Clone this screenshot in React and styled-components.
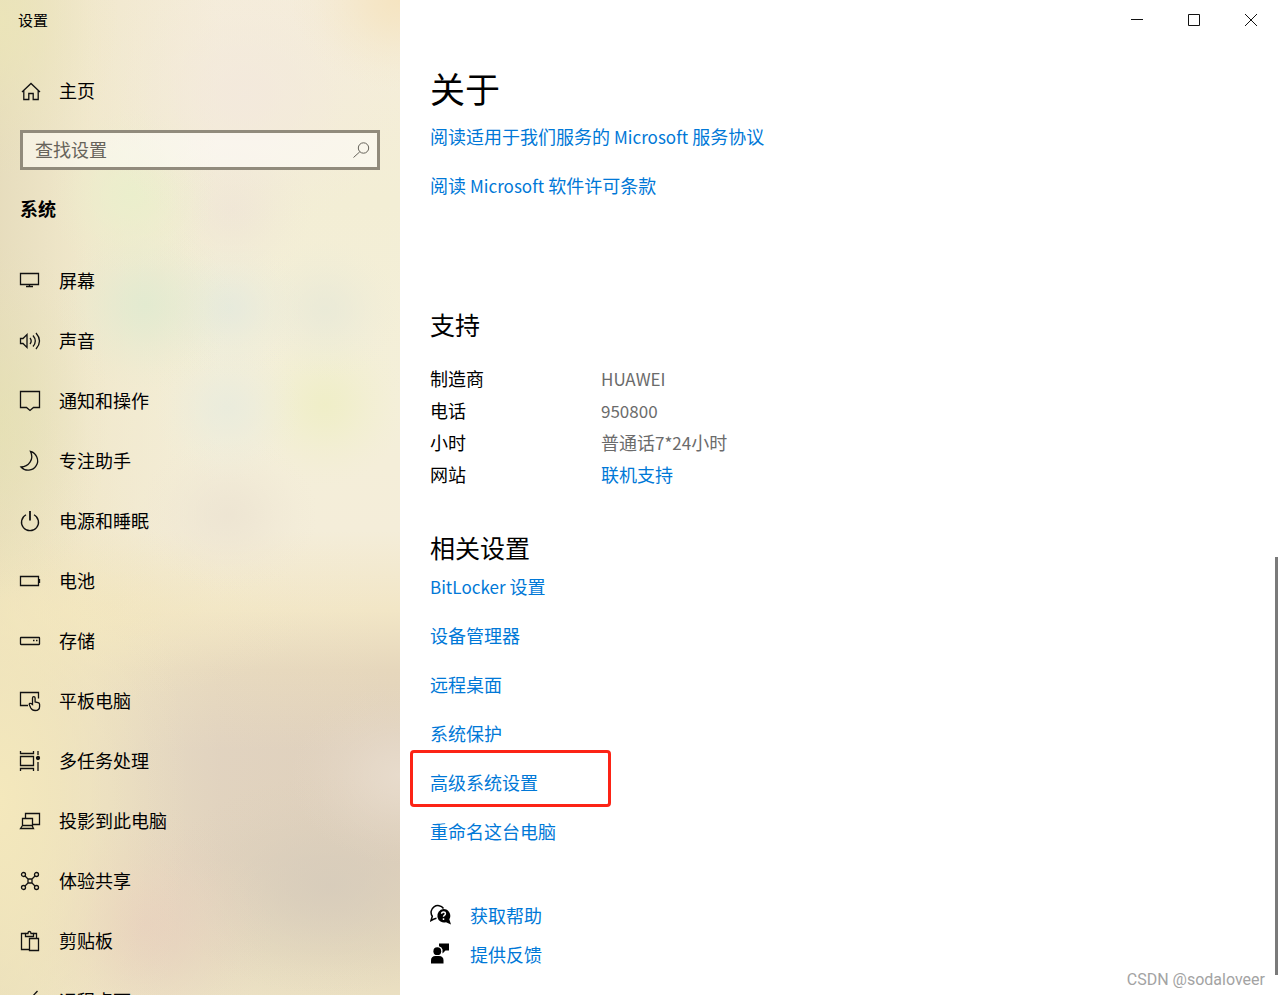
import React from "react";
import styled, { createGlobalStyle, css } from "styled-components";

const GlobalStyle = createGlobalStyle`
  *, *::before, *::after { box-sizing: border-box; }
  body {
    margin: 0;
    background: #fff;
    color: #000;
    font-family: "Noto Sans CJK SC", "Open Sans", sans-serif;
    font-size: 18px;
    line-height: 24px;
  }
  ul, dl, dd, h1, h2 { margin: 0; padding: 0; }
  ul { list-style: none; }
`;

const Window = styled.div`
  display: flex;
  height: 100vh;
  overflow: hidden;
`;

/* Sidebar */

const blob = (x, y, w, h, color, peak = 0.9) =>
  `radial-gradient(${w}px ${h}px at ${x}px ${y}px, rgba(${color}, ${peak}), rgba(${color}, ${peak * 0.75}) 25%, rgba(${color}, ${peak * 0.35}) 55%, rgba(${color}, ${peak * 0.1}) 80%, rgba(${color}, 0))`;

const Sidebar = styled.aside`
  flex: 0 0 400px;
  overflow: hidden;
  background:
    ${blob(400, 0, 110, 90, "245,227,190")},
    ${blob(0, 20, 120, 160, "236,230,184", 0.8)},
    ${blob(245, 95, 160, 140, "243,232,221", 0.8)},
    ${blob(132, 195, 85, 85, "234,239,204")},
    ${blob(232, 210, 80, 80, "239,229,214", 0.8)},
    ${blob(145, 305, 90, 85, "225,234,208")},
    ${blob(230, 308, 75, 70, "228,233,221", 0.8)},
    ${blob(325, 310, 75, 70, "232,233,215", 0.8)},
    ${blob(228, 408, 75, 75, "232,235,221", 0.8)},
    ${blob(325, 405, 80, 80, "239,238,198")},
    ${blob(228, 515, 90, 80, "236,227,209", 0.8)},
    ${blob(0, 420, 110, 180, "229,225,178", 0.7)},
    ${blob(0, 800, 190, 420, "244,232,188", 1)},
    ${blob(60, 615, 260, 90, "243,230,190", 0.7)},
    ${blob(400, 775, 110, 90, "232,220,205")},
    ${blob(145, 925, 130, 120, "231,208,190")},
    ${blob(330, 885, 170, 110, "215,204,187")},
    linear-gradient(90deg, rgba(230,220,188,0.95), rgba(239,229,198,0.65) 22%, rgba(244,238,216,0.1) 55%, rgba(244,238,216,0)),
    linear-gradient(180deg, #f5eddb 0, #f3eed5 200px, #f4efd9 400px, #f4edd9 530px, #f2e6c6 610px, #e6d7bc 670px, #dfd0bd 750px, #dfd0bb 860px, #e5d9bd 950px, #ebe0c2 1000px);
`;

const WindowTitle = styled.div`
  height: 40px;
  padding: 8px 18px;
  font-size: 15px;
`;

const SidebarItem = styled.a`
  display: flex;
  align-items: center;
  gap: 18px;
  height: 60px;
  padding-left: 19px;
  color: #000;
  text-decoration: none;
`;

const ItemLabel = styled.span`
  padding-bottom: 2px;
`;

const HomeArea = styled.div`
  padding: 21px 0 9px;
`;

const Icon = styled.svg`
  flex: none;
  width: 22px;
  height: 22px;
  fill: none;
  stroke: #111;
  stroke-width: 1.3;
`;

const SearchBox = styled.label`
  display: flex;
  align-items: center;
  height: 40px;
  margin: 0 20px;
  padding: 0 6px 0 12px;
  border: 3px solid #918b7c;
  background: rgba(255, 255, 255, 0.5);
`;

const SearchInput = styled.input`
  flex: 1;
  min-width: 0;
  padding: 0 0 2px;
  border: 0;
  outline: 0;
  background: transparent;
  color: #000;
  font: inherit;
  &::placeholder { color: #66635a; opacity: 1; }
`;

const SearchIcon = styled(Icon)`
  width: 20px;
  height: 20px;
  stroke: #66635a;
  stroke-width: 1;
`;

const Category = styled.h2`
  margin: 26px 20px 31px;
  font-size: 18px;
  font-weight: 700;
`;

/* Main pane */

const Main = styled.main`
  position: relative;
  flex: 1;
  min-width: 0;
  overflow: hidden;
  background: #fff;
`;

const Controls = styled.div`
  display: flex;
  justify-content: flex-end;
  padding-right: 1px;
`;

const ControlButton = styled.button`
  width: 57px;
  height: 40px;
  padding: 0;
  border: 0;
  background: none;
  svg { display: block; margin: 0 auto; stroke-width: 1; }
`;

const Content = styled.div`
  padding: 24px 30px 0;
`;

const PageTitle = styled.h1`
  margin-bottom: 12px;
  font-size: 35px;
  font-weight: 400;
  line-height: 48px;
`;

const SectionTitle = styled.h2`
  font-size: 25px;
  font-weight: 400;
  line-height: 36px;
`;

const Section = styled.section`
  margin-top: ${(p) => p.$space}px;
`;

const LinkList = styled.ul`
  display: grid;
  justify-items: start;
  gap: 25px;
`;

const RelatedList = styled(LinkList)`
  margin-top: 9px;
`;

const LinkRow = styled.li`
  position: relative;
  ${(p) =>
    p.$marked &&
    css`
      &::after {
        content: "";
        position: absolute;
        top: -20px;
        left: -20px;
        width: 201px;
        height: 57px;
        border: 3px solid #fc2315;
        border-radius: 4px;
        pointer-events: none;
      }
    `}
`;

const TextLink = styled.a`
  color: #0078d7;
  text-decoration: none;
`;

const Latin = styled.span`
  font-size: 17px;
  line-height: 17px;
`;

const Details = styled.dl`
  display: grid;
  grid-template-columns: 171px 1fr;
  row-gap: 8px;
  margin-top: 24px;
`;

const DetailValue = styled.dd`
  color: #6b6b6b;
`;

const HelpList = styled.ul`
  display: grid;
  gap: 15px;
  margin-top: 60px;
`;

const HelpRow = styled.li`
  display: flex;
  align-items: center;
  gap: 18px;
`;

const ScrollThumb = styled.div`
  position: absolute;
  right: 2px;
  top: 56%;
  bottom: 2%;
  width: 3px;
  background: #7a7a7a;
`;

const Watermark = styled.div`
  position: absolute;
  right: 15px;
  bottom: 3px;
  color: #a3a3a3;
  font-family: Roboto, sans-serif;
  font-size: 16px;
`;

const NAV = [
  ["屏幕", <><path d="M1.5 3.5h18v11h-18z" /><path d="M10.5 14.5v2.5M7 16.5h7" /></>],
  ["声音", <><path d="M1.5 8.5H4l4-4v13l-4-4H1.5z" /><path d="M11 8q2.4 3 0 6M14 5.5q4.6 5.5 0 11M17 3q7 8 0 16" /></>],
  ["通知和操作", <path d="M1.5 1.5h19v16h-6L11 20.5l-3.5-3h-6z" />],
  ["专注助手", <path d="M11.5 1.5A9.5 9.5 0 1 1 2 17C9.5 16.5 15.5 9.5 11.5 1.5z" />],
  ["电源和睡眠", <><path d="M7 4.7a8.5 8.5 0 1 0 8 0" /><path d="M11 1v9.5" strokeWidth="1.8" /></>],
  ["电池", <><path d="M1.5 6.5h18v9h-18z" /><path d="M20.5 9v4" /></>],
  ["存储", <><rect x="1.5" y="7.5" width="19" height="7" rx="0.5" /><path d="M14 10.5h1.5M17 10.5h1.5" /></>],
  ["平板电脑", <><path d="M9 15.5H1.5v-13h18v6" /><path d="M13.5 14.5V8a1.3 1.3 0 0 1 2.6 0v4l3 .6q1.5.4 1.5 1.8v2q0 4-4.5 4.1-3 0-4.3-2.5l-1.6-3.5q.2-1.7 1.9-1z" /></>],
  ["多任务处理", <><path d="M1.5 1v2.5h13V1M1.5 6.5h13v9h-13zM1.5 21v-2.5h13V21M19 1v4M19 12v9" /><circle cx="19" cy="8" r="1.5" fill="#111" /></>],
  ["投影到此电脑", <><path d="M6.5 8V3.5h14v11h-6.5" /><path d="M3.5 15.5v-7h10v7zM3.5 15.5l-2 3h13l-1.5-3" /></>],
  ["体验共享", <><circle cx="4.5" cy="4.5" r="2" /><circle cx="17.5" cy="4.5" r="2" /><circle cx="4.5" cy="17.5" r="2" /><circle cx="17.5" cy="17.5" r="2" /><path d="M9 9h4v4H9zM6 6l3 3M16 6l-3 3M6 16l3-3M16 16l-3-3" /></>],
  ["剪贴板", <><path d="M10 19.5H2.5v-16h4M14.5 3.5h3v4.5" /><path d="M6.5 6.5v-3H9q0-2 1.5-2t1.5 2h2.5v3z" /><path d="M10.5 8.5h9v12h-9z" /></>],
  ["远程桌面", <path d="M18.5 1l-6 6.5 6 6.5M3 5.5l6 6.5-6 6.5" />],
];

const RELATED = [
  { id: "bitlocker", text: <><Latin>BitLocker</Latin> 设置</> },
  { id: "devices", text: "设备管理器" },
  { id: "remote", text: "远程桌面" },
  { id: "protection", text: "系统保护" },
  { id: "advanced", text: "高级系统设置", marked: true },
  { id: "rename", text: "重命名这台电脑" },
];

export default function App() {
  return (
    <>
      <GlobalStyle />
      <Window>
        <Sidebar>
          <WindowTitle>设置</WindowTitle>
          <HomeArea>
            <SidebarItem href="#home">
              <Icon viewBox="0 0 22 22" aria-hidden="true">
                <path d="M3 12l9-8.5 9 8.5M4.8 10.5v9h5v-6h4.4v6h5v-9" />
              </Icon>
              <ItemLabel>主页</ItemLabel>
            </SidebarItem>
          </HomeArea>
          <SearchBox>
            <SearchInput type="text" placeholder="查找设置" aria-label="查找设置" />
            <SearchIcon viewBox="0 0 20 20" aria-hidden="true">
              <circle cx="12.5" cy="8" r="5.2" />
              <path d="M8.8 11.8L2.5 17.5" />
            </SearchIcon>
          </SearchBox>
          <Category>系统</Category>
          <nav aria-label="系统">
            {NAV.map(([label, drawing]) => (
              <SidebarItem key={label} href={`#${label}`}>
                <Icon viewBox="0 0 22 22" aria-hidden="true">{drawing}</Icon>
                <ItemLabel>{label}</ItemLabel>
              </SidebarItem>
            ))}
          </nav>
        </Sidebar>

        <Main>
          <Controls>
            <ControlButton type="button" aria-label="最小化">
              <Icon viewBox="0 0 22 22"><path d="M5 10.5h12" /></Icon>
            </ControlButton>
            <ControlButton type="button" aria-label="最大化">
              <Icon viewBox="0 0 22 22"><path d="M5.5 5.5h11v11h-11z" /></Icon>
            </ControlButton>
            <ControlButton type="button" aria-label="关闭">
              <Icon viewBox="0 0 22 22"><path d="M5 5l12 12M17 5L5 17" /></Icon>
            </ControlButton>
          </Controls>
          <Content>
            <PageTitle>关于</PageTitle>
            <LinkList>
              <LinkRow>
                <TextLink href="#services">阅读适用于我们服务的 <Latin>Microsoft</Latin> 服务协议</TextLink>
              </LinkRow>
              <LinkRow>
                <TextLink href="#license">阅读 <Latin>Microsoft</Latin> 软件许可条款</TextLink>
              </LinkRow>
            </LinkList>

            <Section $space={109}>
              <SectionTitle>支持</SectionTitle>
              <Details>
                <dt>制造商</dt>
                <DetailValue><Latin>HUAWEI</Latin></DetailValue>
                <dt>电话</dt>
                <DetailValue><Latin>950800</Latin></DetailValue>
                <dt>小时</dt>
                <DetailValue>普通话<Latin>7*24</Latin>小时</DetailValue>
                <dt>网站</dt>
                <DetailValue><TextLink href="#support">联机支持</TextLink></DetailValue>
              </Details>
            </Section>

            <Section $space={43}>
              <SectionTitle>相关设置</SectionTitle>
              <RelatedList>
                {RELATED.map(({ id, text, marked }) => (
                  <LinkRow key={id} $marked={marked}>
                    <TextLink href={`#${id}`}>{text}</TextLink>
                  </LinkRow>
                ))}
              </RelatedList>
            </Section>

            <HelpList>
              <HelpRow>
                <Icon viewBox="0 0 22 22" aria-hidden="true">
                  <path d="M6.5 14.2q-2 .3-5.5 2.3l1.3-4.2A6.3 6.3 0 1 1 13.5 4.5" stroke="#000" strokeWidth="1.5" />
                  <path d="M13.5 5a6.8 6.8 0 0 1 5.8 10.3L21 20.5l-5-2.2A6.8 6.8 0 1 1 13.5 5z" fill="#000" stroke="none" />
                  <path d="M11.6 9.8q0-1.8 1.9-1.8t1.9 1.7q0 .9-1.100 1.600-.8.5-.8 1.5M13.5 14.3v1.600" stroke="#fff" strokeWidth="1.5" />
                </Icon>
                <TextLink href="#help">获取帮助</TextLink>
              </HelpRow>
              <HelpRow>
                <Icon viewBox="0 0 22 22" aria-hidden="true">
                  <g fill="#000" stroke="none">
                    <circle cx="7.3" cy="8.2" r="3.9" />
                    <path d="M1 20.5v-3q0-4.5 4.5-4.5h3.500q4.500 0 4.500 4.500v3z" />
                    <path d="M9 .5h10v7h-3.5L12.5 10.5V6.5Q12 4 9 3.300z" />
                  </g>
                </Icon>
                <TextLink href="#feedback">提供反馈</TextLink>
              </HelpRow>
            </HelpList>
          </Content>
          <ScrollThumb />
          <Watermark>CSDN @sodaloveer</Watermark>
        </Main>
      </Window>
    </>
  );
}
